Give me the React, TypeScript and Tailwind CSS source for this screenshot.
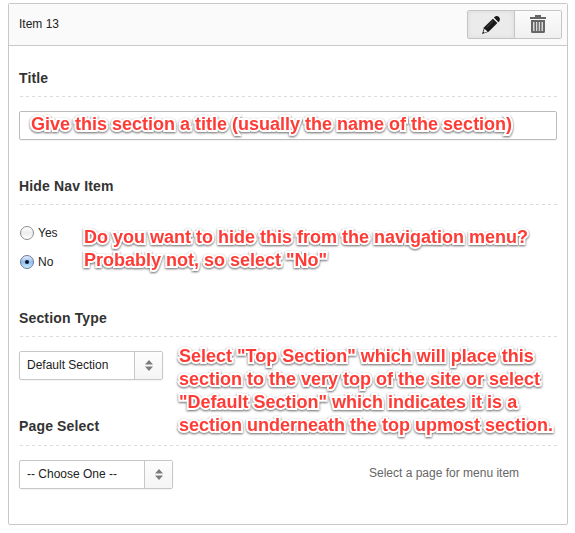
import React from "react";

function Heading({ children, className, gap = "mb-[8px]" }: { children: React.ReactNode; className: string; gap?: string }) {
  return (
    <div className={`flex flex-col justify-end ${className}`}>
      <h2 className={`text-[14px] leading-[20px] font-bold tracking-[0.15px] whitespace-nowrap text-[#333] ${gap}`}>{children}</h2>
      <div className="ml-px h-px bg-[repeating-linear-gradient(90deg,#dcdcdc_0px,#dcdcdc_3px,transparent_3px,transparent_6px)]" />
    </div>
  );
}

function Select({ label, className }: { label: string; className: string }) {
  return (
    <div className={`flex h-[29px] rounded-[2px] border border-[#c7c7c7] bg-white shadow-[0_1px_2px_#0000000d] ${className}`}>
      <span className="flex-1 pl-[7px] text-[12px] leading-[26px] whitespace-nowrap text-[#222]">{label}</span>
      <span className="flex w-[28px] items-center justify-center border-l border-[#c7c7c7] bg-gradient-to-b from-[#fdfdfd] to-[#f5f5f5]">
        <svg width="8" height="11" viewBox="0 0 8 11" fill="#7b7b7b">
          <path d="M4 0 8 4.5H0ZM0 6.5H8L4 11Z" />
        </svg>
      </span>
    </div>
  );
}

function Radio({ label, checked, className = "" }: { label: string; checked?: boolean; className?: string }) {
  return (
    <label className={`flex h-[16px] items-center pl-px ${className}`}>
      <span
        className={`flex size-[14px] items-center justify-center rounded-full border ${
          checked
            ? "border-[#68779c] bg-gradient-to-b from-[#e5f0fc] via-[#91bdec] to-[#c9edff]"
            : "border-[#8d8d8d] bg-gradient-to-b from-white via-[#ededed] to-white"
        }`}
      >
        {checked && <span className="size-[4px] rounded-full bg-[#091426]" />}
      </span>
      <span className="ml-[4px] text-[12px] leading-[16px] text-[#222]">{label}</span>
    </label>
  );
}

function Note({ lines, className }: { lines: string[]; className: string }) {
  return (
    <div
      className={`absolute text-[18px] leading-[23px] font-bold whitespace-nowrap text-[#ff3b36] [-webkit-text-stroke:4px_white] [paint-order:stroke_fill] [stroke-linejoin:round] [filter:drop-shadow(0_1px_1px_#00000098)] ${className}`}
    >
      {lines.map((line) => (
        <div key={line}>{line}</div>
      ))}
    </div>
  );
}

export default function App() {
  return (
    <div className="relative h-[533px] w-[575px] overflow-hidden bg-white pt-[3px] pl-[8px] font-['Liberation_Sans',Arial,sans-serif]">
      <div className="h-[522px] w-[560px] rounded-[2px] border border-[#c8c8c8] bg-white">
        <header className="flex h-[42px] items-start justify-between border-b border-[#c8c8c8] bg-[#fafafa] pt-[6px] pr-[5px] pl-[10px]">
          <span className="pt-[6px] text-[12px] leading-[16px] text-[#222]">Item 13</span>
          <div className="flex h-[29px] w-[95px] overflow-hidden rounded-[2px] border border-[#c5c5c5]">
            <button className="flex w-[47px] items-center justify-center border-r border-[#c5c5c5] bg-[#ebebeb] shadow-[inset_0_0_5px_#00000012]">
              <svg width="20" height="20" viewBox="0 0 20 20" fill="#171717">
                <path d="m12.9 2.6.9-.9q2-1.6 4.2.4 2 2.2.4 4.2l-.9.9Z" />
                <path d="m11.9 3.7 4.5 4.4-8.8 8.6-6.5 2.2 2-6.6Z" />
                <path d="m3.5 13.7 3.1 2.9-3.1 1.1-1.1-1Z" fill="#ebebeb" />
                <path d="m5.6 12.6 6.6-6.5" stroke="#666" strokeWidth=".7" />
              </svg>
            </button>
            <button className="flex flex-1 items-center justify-center bg-gradient-to-b from-[#fbfbfb] to-[#f0f0f0] pb-px">
              <svg width="16" height="18" viewBox="0 0 16 18" fill="#666">
                <path d="M0 2H5V0H11V2H16V4H0Z" />
                <path d="M1 5H15V16.5Q15 18 13.5 18H2.5Q1 18 1 16.5ZM3.2 7V16H4.4V7ZM6.2 7V16H7.2V7ZM8.8 7V16H9.8V7ZM11.6 7V16H12.8V7Z" fillRule="evenodd" />
              </svg>
            </button>
          </div>
        </header>

        <main className="flex flex-col px-[10px]">
          <Heading className="h-[51px] w-[538px]">Title</Heading>
          <input
            aria-label="Title"
            className="mt-[14px] h-[29px] w-[538px] rounded-[2px] border border-[#bcbcbc] bg-white shadow-[0_1px_2px_#0000000f]"
          />
          <Heading className="h-[65px] w-[538px]">Hide Nav Item</Heading>
          <Radio className="mt-[20px]" label="Yes" />
          <Radio className="mt-[13px]" label="No" checked />
          <Heading className="h-[67px] w-[538px]">Section Type</Heading>
          <Select className="mt-[14px] w-[144px]" label="Default Section" />
          <Heading className="h-[66px] w-[538px]" gap="mb-[9px]">Page Select</Heading>
          <div className="mt-[14px] flex">
            <Select className="w-[154px]" label="-- Choose One --" />
            <span className="ml-[196px] text-[12px] leading-[26px] whitespace-nowrap text-[#666]">
              Select a page for menu item
            </span>
          </div>
        </main>
      </div>

      <Note className="top-[113px] left-[31px]" lines={["Give this section a title (usually the name of the section)"]} />
      <Note
        className="top-[226px] left-[84px]"
        lines={["Do you want to hide this from the navigation menu?", 'Probably not, so select "No"']}
      />
      <Note
        className="top-[345px] left-[179px]"
        lines={[
          'Select "Top Section" which will place this',
          "section to the very top of the site or select",
          '"Default Section" which indicates it is a',
          "section underneath the top upmost section.",
        ]}
      />
    </div>
  );
}
